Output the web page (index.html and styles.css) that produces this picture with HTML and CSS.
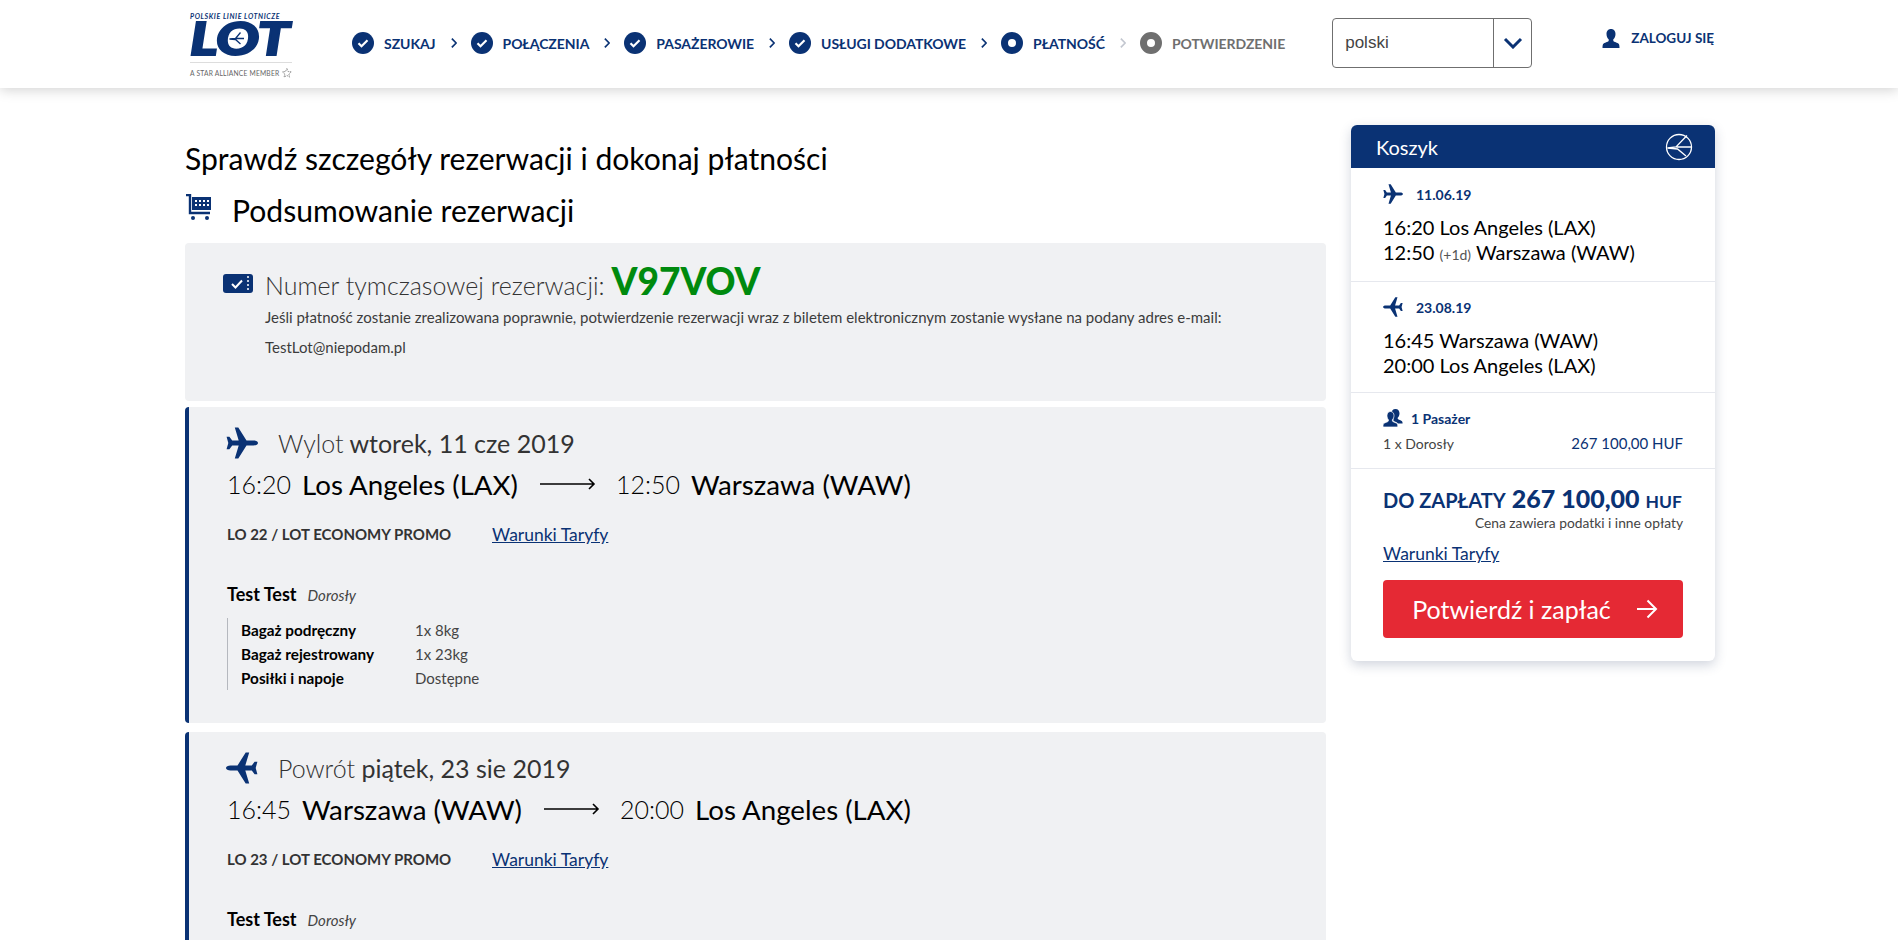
FILE: index.html
```html
<!DOCTYPE html>
<html lang="pl">

<head>
    <meta charset="UTF-8" />
    <title>Podsumowanie rezerwacji</title>
    <link rel="stylesheet" href="styles.css">
</head>

<body>
    <svg class="defs" width="0" height="0">
        <symbol id="plane" viewBox="0 0 32 32">
            <path d="M32 16c0 1.400-2 2.500-4.500 2.500h-7L12.300 31.500H8.800l3.900-13H6.200l-2.800 3.800H.6L2.300 16 .6 9.700h2.800l2.800 3.800h6.500L8.800.500h3.500l8.200 13h7C30 13.500 32 14.600 32 16z" />
        </symbol>
        <symbol id="check" viewBox="0 0 22 22">
            <circle cx="11" cy="11" r="11" />
            <path d="M6.500 11.300l3 3 6-6" fill="none" stroke="#fff" stroke-width="2.200" />
        </symbol>
        <symbol id="chev" viewBox="0 0 7 12">
            <path d="M1 1l5 5-5 5" fill="none" stroke="currentColor" stroke-width="2" />
        </symbol>
    </svg>

    <header class="topbar">
        <div class="logo">
            <div class="logo-top">POLSKIE LINIE LOTNICZE</div>
            <div class="logo-lot">LOT</div>
            <svg class="logo-globe" width="15" height="15" viewBox="0 0 15 15">
                <circle cx="7.500" cy="7.500" r="7.500" fill="#fff" />
                <path d="M11.500 1.500L6.500 7.500l-6 .5 6 .5 5 4.500M6.500 7.500H15" fill="none" stroke="#0a3274" stroke-width="1.300" />
            </svg>
            <div class="logo-star">A STAR ALLIANCE MEMBER
                <svg width="12" height="12" viewBox="0 0 12 12"><path d="M6 .5l1.600 3.700 3.900.4-3 2.600.9 3.900L6 9l-3.400 2.100.9-3.900-3-2.600 3.900-.4z" fill="none" stroke="#777" stroke-width="1" stroke-dasharray="2 1" /></svg>
            </div>
        </div>

        <nav class="steps">
            <div class="step"><svg class="step-ico"><use href="#check" /></svg>SZUKAJ</div>
            <svg class="chev"><use href="#chev" /></svg>
            <div class="step"><svg class="step-ico"><use href="#check" /></svg>POŁĄCZENIA</div>
            <svg class="chev"><use href="#chev" /></svg>
            <div class="step"><svg class="step-ico"><use href="#check" /></svg>PASAŻEROWIE</div>
            <svg class="chev"><use href="#chev" /></svg>
            <div class="step"><svg class="step-ico"><use href="#check" /></svg>USŁUGI DODATKOWE</div>
            <svg class="chev"><use href="#chev" /></svg>
            <div class="step"><span class="dot"></span>PŁATNOŚĆ</div>
            <svg class="chev chev-off"><use href="#chev" /></svg>
            <div class="step step-off"><span class="dot dot-off"></span>POTWIERDZENIE</div>
        </nav>

        <div class="lang">
            <span class="lang-val">polski</span>
            <span class="lang-btn">
                <svg width="20" height="12" viewBox="0 0 20 12"><path d="M2 2l8 8 8-8" fill="none" stroke="#0a3274" stroke-width="3" /></svg>
            </span>
        </div>

        <a class="login">
            <svg width="18" height="19" viewBox="0 0 18 19"><path d="M9 0c3 0 4.500 2.300 4.500 5 0 2.400-1 4.300-2.200 5.300v1.500c0 1 3 1.500 5 2.800.9.600 1.200 1.800 1.200 4.400H.5c0-2.600.3-3.800 1.200-4.400 2-1.300 5-1.800 5-2.800v-1.500C5.500 9.300 4.500 7.400 4.500 5 4.500 2.300 6 0 9 0z" fill="#0a3274" /></svg>
            ZALOGUJ SIĘ
        </a>
    </header>

    <main class="page">
        <section class="content">
            <h1 class="title">Sprawdź szczegóły rezerwacji i dokonaj płatności</h1>
            <h2 class="subtitle">
                <svg class="cart" width="27" height="27" viewBox="0 0 27 27">
                    <path d="M1 1h4v18h20" fill="none" stroke="#0a3274" stroke-width="2.400" />
                    <path d="M7 3h19v13H7z" fill="#0a3274" />
                    <path d="M10 6h2v2h-2zm4 0h2v2h-2zm4 0h2v2h-2zm4 0h2v2h-2zm-12 4h2v2h-2zm4 0h2v2h-2zm4 0h2v2h-2zm4 0h2v2h-2z" fill="#fff" />
                    <circle cx="8" cy="24" r="2" fill="#0a3274" />
                    <circle cx="22" cy="24" r="2" fill="#0a3274" />
                </svg>
                Podsumowanie rezerwacji
            </h2>

            <div class="box box-pnr">
                <div class="pnr-row">
                    <svg class="ticket" width="30" height="19" viewBox="0 0 30 19">
                        <rect width="30" height="19" rx="3" fill="#0a3274" />
                        <path d="M9 10l3.500 3.500L19 6.500" fill="none" stroke="#fff" stroke-width="2" />
                        <path d="M25 2v15" stroke="#fff" stroke-width="1.500" stroke-dasharray="2 2" />
                    </svg>
                    <span class="pnr-label">Numer tymczasowej rezerwacji:</span>
                    <span class="pnr-code">V97VOV</span>
                </div>
                <p class="pnr-text">Jeśli płatność zostanie zrealizowana poprawnie, potwierdzenie rezerwacji wraz z biletem elektronicznym zostanie wysłane na podany adres e-mail:</p>
                <p class="pnr-text">TestLot@niepodam.pl</p>
            </div>

            <div class="box flight">
                <div class="flight-head">
                    <svg class="flight-ico"><use href="#plane" /></svg>
                    <span class="thin">Wylot</span>&nbsp;wtorek, 11 cze 2019
                </div>
                <div class="route">
                    <span class="time">16:20</span><span class="city">Los Angeles (LAX)</span>
                    <svg class="arrow" width="56" height="12" viewBox="0 0 56 12"><path d="M0 6h54M49 1l5 5-5 5" fill="none" stroke="#000" stroke-width="1.600" /></svg>
                    <span class="time">12:50</span><span class="city">Warszawa (WAW)</span>
                </div>
                <div class="fare"><span class="fare-name">LO 22 / LOT ECONOMY PROMO</span><a class="link">Warunki Taryfy</a></div>
                <div class="pax"><b>Test Test</b><i>Dorosły</i></div>
                <div class="extras">
                    <div class="extra"><b>Bagaż podręczny</b><span>1x 8kg</span></div>
                    <div class="extra"><b>Bagaż rejestrowany</b><span>1x 23kg</span></div>
                    <div class="extra"><b>Posiłki i napoje</b><span>Dostępne</span></div>
                </div>
            </div>

            <div class="box flight">
                <div class="flight-head">
                    <svg class="flight-ico flip"><use href="#plane" /></svg>
                    <span class="thin">Powrót</span>&nbsp;piątek, 23 sie 2019
                </div>
                <div class="route">
                    <span class="time">16:45</span><span class="city">Warszawa (WAW)</span>
                    <svg class="arrow" width="56" height="12" viewBox="0 0 56 12"><path d="M0 6h54M49 1l5 5-5 5" fill="none" stroke="#000" stroke-width="1.600" /></svg>
                    <span class="time">20:00</span><span class="city">Los Angeles (LAX)</span>
                </div>
                <div class="fare"><span class="fare-name">LO 23 / LOT ECONOMY PROMO</span><a class="link">Warunki Taryfy</a></div>
                <div class="pax"><b>Test Test</b><i>Dorosły</i></div>
                <div class="extras">
                    <div class="extra"><b>Bagaż podręczny</b><span>1x 8kg</span></div>
                    <div class="extra"><b>Bagaż rejestrowany</b><span>1x 23kg</span></div>
                    <div class="extra"><b>Posiłki i napoje</b><span>Dostępne</span></div>
                </div>
            </div>
        </section>

        <aside class="basket">
            <div class="basket-head">
                Koszyk
                <svg width="28" height="28" viewBox="0 0 28 28" fill="none" stroke="#fff" stroke-width="1.300">
                    <circle cx="14" cy="14" r="12.500" />
                    <path d="M22 2.500L11 14l-8.500 1 10 1 8.500 7M11.500 14h15" />
                </svg>
            </div>
            <div class="basket-sec sec-out">
                <div class="leg-date"><svg class="leg-ico"><use href="#plane" /></svg>11.06.19</div>
                <div class="leg-line">16:20 Los Angeles (LAX)</div>
                <div class="leg-line">12:50 <small>(+1d)</small> Warszawa (WAW)</div>
            </div>
            <div class="basket-sec">
                <div class="leg-date"><svg class="leg-ico flip"><use href="#plane" /></svg>23.08.19</div>
                <div class="leg-line">16:45 Warszawa (WAW)</div>
                <div class="leg-line">20:00 Los Angeles (LAX)</div>
            </div>
            <div class="basket-sec sec-pax">
                <div class="pax-head">
                    <svg width="20" height="18" viewBox="0 0 20 18" fill="#0a3274">
                        <path d="M12.500 0c2.700 0 4 2 4 4.300 0 2-.8 3.600-1.800 4.400v1c0 .8 2.500 1.200 4 2.200.7.500.9 1.300.9 2.600h-4.500c-1-1.300-3-2-4.600-2.600V9.500C9 8.500 8.500 6 8.500 4.300 8.500 2 9.800 0 12.500 0z" />
                        <path d="M7.500 2.500c2.300 0 3.500 1.800 3.500 4 0 1.900-.7 3.400-1.600 4.200v1.300c0 .8 2.700 1.300 4.400 2.300.8.500 1 1.500 1 3.700H0c0-2.200.2-3.200 1-3.700 1.700-1 4.400-1.500 4.400-2.300v-1.300C4.500 9.900 4 8.400 4 6.500c0-2.200 1.200-4 3.500-4z" stroke="#fff" stroke-width=".7" />
                    </svg>
                    1 Pasażer
                </div>
                <div class="pax-row"><span>1 x Dorosły</span><span class="pax-price">267 100,00 HUF</span></div>
            </div>
            <div class="basket-sec sec-total">
                <div class="total">DO ZAPŁATY <strong>267 100,00</strong> <span class="cur">HUF</span></div>
                <div class="tax">Cena zawiera podatki i inne opłaty</div>
                <a class="link basket-link">Warunki Taryfy</a>
                <button class="pay">Potwierdź i zapłać
                    <svg width="22" height="20" viewBox="0 0 22 20"><path d="M1 10h19M11.500 1.500L20 10l-8.500 8.500" fill="none" stroke="#fff" stroke-width="2" /></svg>
                </button>
            </div>
        </aside>
    </main>
</body>

</html>
```

FILE: styles.css
```css
html,
body {
    height: 100%;
    overflow: hidden;
}

body {
    margin: 0;
    font-family: Lato, "Open Sans", sans-serif;
    color: #000;
    background: #fff;
}

.defs {
    position: absolute;
}

.flip {
    transform: scaleX(-1);
}

/* top bar */
.topbar {
    display: flex;
    height: 88px;
    padding-left: 190px;
    background: #fff;
    box-shadow: 0 2px 12px rgba(0, 0, 0, 0.18);
    box-sizing: border-box;
}

.logo {
    position: relative;
    width: 102px;
    padding-top: 12px;
    color: #0a3274;
}

.logo-top {
    font-size: 7px;
    font-style: italic;
    font-weight: 700;
    letter-spacing: 0.6px;
    line-height: 8px;
    white-space: nowrap;
}

.logo-lot {
    height: 34px;
    font-size: 46px;
    font-style: italic;
    font-weight: 900;
    line-height: 36px;
    -webkit-text-stroke: 2px #0a3274;
    transform: scaleX(1.24);
    transform-origin: left center;
}

.logo-globe {
    position: absolute;
    top: 31px;
    left: 39px;
}

.logo-star {
    display: flex;
    align-items: center;
    gap: 3px;
    margin-top: 8px;
    padding-top: 4px;
    border-top: 1px solid #ddd;
    color: #666;
    font-size: 6.700px;
    letter-spacing: 0.2px;
    white-space: nowrap;
}

.steps {
    display: flex;
    align-items: center;
    height: 86px;
    margin-left: 60px;
    font-size: 14px;
    font-weight: 700;
    letter-spacing: -0.05px;
    color: #0a3274;
}

.step {
    display: flex;
    align-items: center;
    gap: 10px;
    white-space: nowrap;
}

.step-off {
    color: #6f6f6f;
}

.step-ico {
    width: 22px;
    height: 22px;
    fill: #0a3274;
}

.dot {
    width: 8px;
    height: 8px;
    border: 7px solid #0a3274;
    border-radius: 50%;
}

.dot-off {
    border-color: #6f6f6f;
}

.chev {
    width: 6px;
    height: 12px;
    margin: 0 14px 0 15px;
    color: #0a3274;
}

.chev-off {
    color: #c3c7d0;
}

.lang {
    display: flex;
    width: 200px;
    height: 50px;
    margin: 18px 0 0 47px;
    border: 1px solid #6f6f6f;
    border-radius: 4px;
    box-sizing: border-box;
    color: #444;
    font-family: "Liberation Sans", sans-serif;
}

.lang-val {
    flex: 1;
    padding-left: 12px;
    font-size: 17px;
    line-height: 48px;
}

.lang-btn {
    display: flex;
    align-items: center;
    justify-content: center;
    width: 37px;
    border-left: 1px solid #6f6f6f;
}

.login {
    display: flex;
    align-items: center;
    gap: 11px;
    height: 20px;
    margin: 28px 0 0 70px;
    font-size: 13.500px;
    font-weight: 700;
    color: #0a3274;
    white-space: nowrap;
}

/* page */
.page {
    display: flex;
    align-items: flex-start;
    gap: 25px;
    padding: 37px 0 0 185px;
}

.content {
    width: 1141px;
}

.title {
    margin: 13px 0 0;
    font-size: 30.100px;
    font-weight: 400;
    line-height: 40px;
}

.subtitle {
    display: flex;
    align-items: center;
    gap: 20px;
    margin: 12px 0 13px;
    font-size: 30.100px;
    font-weight: 400;
    line-height: 40px;
}

.cart {
    margin-top: -6px;
}

.box {
    margin-bottom: 6px;
    background: #f0f1f3;
    border-radius: 4px;
}

.box-pnr {
    height: 158px;
    padding: 24px 0 0 38px;
    box-sizing: border-box;
}

.pnr-row {
    display: flex;
    align-items: center;
    height: 35px;
}

.ticket {
    margin: -2px 12px 0 0;
}

.pnr-label {
    font-size: 25px;
    font-weight: 300;
    color: #333;
}

.pnr-code {
    margin: -8px 0 0 7px;
    font-size: 37px;
    font-weight: 900;
    color: #008a0e;
}

.pnr-text {
    margin: 0 0 0 42px;
    font-size: 15px;
    line-height: 30px;
    color: #3c3c3c;
}

.flight {
    height: 316px;
    margin-bottom: 9px;
    padding: 19px 0 0 38px;
    border-left: 4px solid #0a3274;
    box-sizing: border-box;
}

.flight-head {
    display: flex;
    align-items: center;
    height: 34px;
    font-size: 25px;
    color: #333;
}

.flight-ico {
    width: 32px;
    height: 32px;
    margin: 0 20px 0 -1px;
    fill: #0a3274;
}

.thin {
    font-weight: 300;
}

.route {
    display: flex;
    align-items: center;
    height: 40px;
    margin-top: 4px;
}

.time {
    margin-right: 11px;
    font-size: 25px;
    font-weight: 300;
}

.city {
    font-size: 27.700px;
}

.arrow {
    margin: 0 20px 0 22px;
}

.fare {
    display: flex;
    align-items: center;
    margin-top: 15px;
    height: 30px;
}

.fare-name {
    width: 265px;
    font-size: 15px;
    font-weight: 700;
    color: #333;
}

.link {
    font-size: 17.500px;
    color: #0a3274;
    text-decoration: underline;
}

.pax {
    display: flex;
    align-items: baseline;
    gap: 11px;
    margin-top: 34px;
    font-size: 18px;
}

.pax i {
    font-size: 15px;
    color: #444;
}

.extras {
    margin: 13px 0 0;
    padding-left: 13px;
    border-left: 1px solid #b5b8be;
}

.extra {
    display: flex;
    height: 24px;
    font-size: 15px;
    line-height: 24px;
}

.extra b {
    width: 174px;
    font-size: 15.300px;
}

.extra span {
    color: #444;
}

/* basket */
.basket {
    width: 364px;
    border-radius: 6px;
    background: #fff;
    box-shadow: 0 4px 12px rgba(40, 60, 100, 0.22);
}

.basket-head {
    display: flex;
    align-items: center;
    justify-content: space-between;
    height: 43px;
    padding: 0 22px 0 25px;
    border-radius: 6px 6px 0 0;
    background: #0a3274;
    color: #fff;
    font-size: 20px;
}

.basket-sec {
    padding: 14px 32px 0;
    height: 111px;
    border-bottom: 1px solid #e6e8ee;
    box-sizing: border-box;
}

.sec-out {
    height: 114px;
    padding-top: 15px;
}

.leg-date {
    display: flex;
    align-items: center;
    gap: 13px;
    height: 22px;
    margin-bottom: 10px;
    font-size: 14px;
    font-weight: 700;
    color: #0a3274;
}

.leg-ico {
    width: 20px;
    height: 20px;
    fill: #0a3274;
}

.leg-line {
    font-size: 20px;
    line-height: 25px;
    white-space: nowrap;
}

.leg-line small {
    font-size: 14px;
    color: #555;
}

.sec-pax {
    height: 76px;
    padding-top: 16px;
}

.pax-head {
    display: flex;
    align-items: center;
    gap: 8px;
    font-size: 14px;
    font-weight: 700;
    color: #0a3274;
}

.pax-row {
    display: flex;
    align-items: baseline;
    justify-content: space-between;
    margin-top: 7px;
    font-size: 14px;
    color: #444;
}

.pax-price {
    font-size: 15px;
    color: #0a3274;
}

.sec-total {
    height: auto;
    padding: 14px 32px 23px;
    border-bottom: 0;
}

.total {
    display: flex;
    align-items: baseline;
    gap: 6px;
    white-space: nowrap;
    font-size: 20px;
    font-weight: 700;
    color: #0a3274;
}

.total strong {
    font-size: 25px;
}

.cur {
    font-size: 17.500px;
}

.tax {
    margin-top: 1px;
    text-align: right;
    font-size: 13.800px;
    color: #444;
}

.basket-link {
    display: block;
    margin-top: 11px;
    line-height: 24px;
}

.pay {
    display: flex;
    align-items: center;
    justify-content: center;
    gap: 25px;
    width: 100%;
    height: 58px;
    margin-top: 14px;
    padding: 0 0 0 4px;
    border: 0;
    border-radius: 4px;
    background: #e52934;
    color: #fff;
    font-family: inherit;
    font-size: 25px;
}
```
